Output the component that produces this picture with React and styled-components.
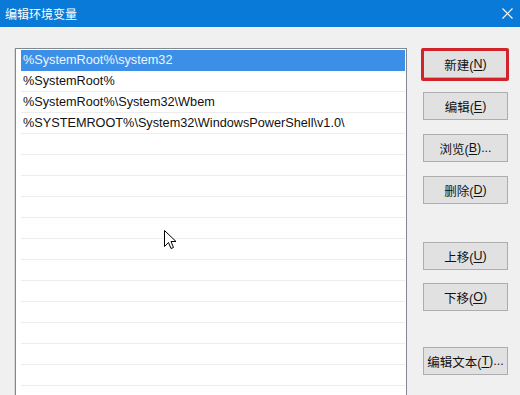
import React from "react";
import styled, { createGlobalStyle } from "styled-components";

const GlobalStyle = createGlobalStyle`
  html, body {
    margin: 0;
    padding: 0;
    overflow: hidden;
    background: #f0f0f0;
  }
`;

const Window = styled.div`
  width: 520px;
  height: 395px;
  background: #f0f0f0;
  font-family: "Liberation Sans", "Noto Sans CJK SC", sans-serif;
  overflow: hidden;
  position: relative;
`;

const TitleBar = styled.div`
  height: 27px;
  background: #0a7ad8;
  color: #fff;
  display: flex;
  align-items: center;
  justify-content: space-between;
  padding: 0 7px 0 5px;
  font-size: 12px;
  font-family: "Noto Sans CJK SC", sans-serif;
`;

const Body = styled.div`
  display: flex;
  padding: 21px 0 0 15px;
  gap: 16px;
`;

const List = styled.div`
  width: 384px;
  height: 360px;
  background: #fff;
  border: 1px solid #828790;
  box-shadow: -2px 0 0 -1px #d8d8d8;
  padding: 1px 1px 0 5px;
  overflow: hidden;
`;

const Row = styled.div`
  height: 20px;
  border-bottom: 1px solid ${(p) => (p.$selected ? "#3b8fe7" : "#ececec")};
  background: ${(p) => (p.$selected ? "#3b8fe7" : "#fff")};
  color: ${(p) => (p.$selected ? "#eef5ff" : "#111")};
  font-size: 12.7px;
  line-height: 20px;
  padding-left: 2px;
  white-space: nowrap;
`;

const Buttons = styled.div`
  display: flex;
  flex-direction: column;
  padding-top: 2px;
`;

const Button = styled.div`
  position: relative;
  width: 83px;
  height: 26px;
  margin-top: ${(p) => p.$gap || 0}px;
  background: #e1e1e1;
  border: 1px solid #adadad;
  display: flex;
  align-items: center;
  justify-content: center;
  font-size: 12.5px;
  color: #111;
  font-family: "Liberation Sans", "Noto Sans CJK SC", sans-serif;
  u {
    text-decoration: underline;
    text-underline-offset: 2px;
  }
  ${(p) =>
    p.$marked &&
    `
    &::after {
      content: "";
      position: absolute;
      top: -3px;
      left: -3px;
      right: -2px;
      bottom: -4px;
      border: 3px solid #d2232a;
      border-radius: 2px;
    }
  `}
`;

const Cursor = styled.svg`
  position: absolute;
  left: 164px;
  top: 230px;
`;

const rows = [
  "%SystemRoot%\\system32",
  "%SystemRoot%",
  "%SystemRoot%\\System32\\Wbem",
  "%SYSTEMROOT%\\System32\\WindowsPowerShell\\v1.0\\",
];

const buttons = [
  { label: "新建", key: "N", gap: 0, marked: true },
  { label: "编辑", key: "E", gap: 14 },
  { label: "浏览", key: "B", gap: 14, dots: true },
  { label: "删除", key: "D", gap: 14 },
  { label: "上移", key: "U", gap: 38 },
  { label: "下移", key: "O", gap: 13 },
  { label: "编辑文本", key: "T", gap: 36, dots: true },
];

export default function App() {
  const filled = [...rows, ...Array(14).fill("")];
  return (
    <Window>
      <GlobalStyle />
      <TitleBar>
        <span>编辑环境变量</span>
        <svg width="11" height="11" viewBox="0 0 11 11">
          <path d="M0.5 0.5 L10.5 10.5 M10.5 0.5 L0.5 10.5" stroke="#fff" strokeWidth="1.1" />
        </svg>
      </TitleBar>
      <Body>
        <List>
          {filled.map((t, i) => (
            <Row key={i} $selected={i === 0}>
              {t}
            </Row>
          ))}
        </List>
        <Buttons>
          {buttons.map((b) => (
            <Button key={b.key} $gap={b.gap} $marked={b.marked}>
              {b.label}(<u>{b.key}</u>){b.dots ? "..." : ""}
            </Button>
          ))}
        </Buttons>
      </Body>
      <Cursor width="13" height="21" viewBox="0 0 13 21">
        <path
          d="M0.5 0.5 L0.5 16.5 L4.5 12.5 L7 18.5 L9.5 17.5 L7 11.5 L12 11.5 Z"
          fill="#fff"
          stroke="#000"
          strokeWidth="1"
          strokeLinejoin="miter"
        />
      </Cursor>
    </Window>
  );
}
